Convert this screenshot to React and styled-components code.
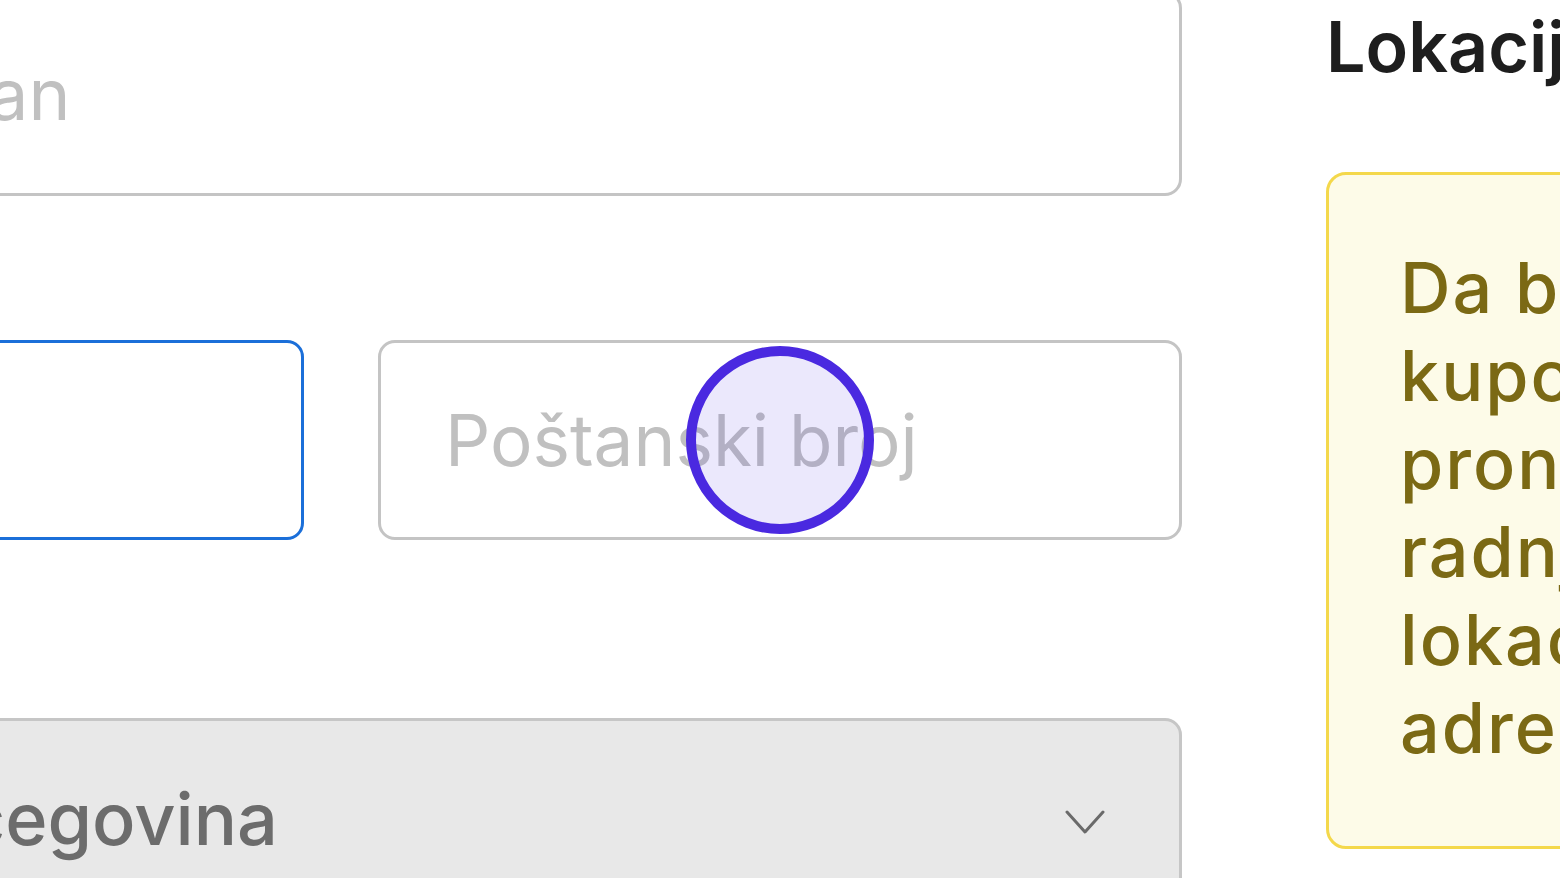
import styled, { createGlobalStyle } from "styled-components";

const Global = createGlobalStyle`
  html, body { margin: 0; padding: 0; background: #ffffff; overflow: hidden; }
  body { font-family: Inter, "Noto Sans", sans-serif; }
`;

const Page = styled.div`
  display: flex;
  align-items: flex-start;
  gap: 144px;
  width: 1560px;
  height: 878px;
  overflow: hidden;
`;

const Form = styled.div`
  flex: 0 0 1682px;
  margin-left: -500px;
  margin-top: -9px;
  display: flex;
  flex-direction: column;
`;

const Row = styled.div`
  display: grid;
  grid-template-columns: 1fr 1fr;
  gap: 74px;
  margin-top: ${(p) => p.$top || 0}px;
`;

const Field = styled.div`
  position: relative;
  margin-top: ${(p) => p.$top || 0}px;
`;

const Input = styled.input`
  box-sizing: border-box;
  width: 100%;
  height: ${(p) => p.$h || 200}px;
  padding: 0 64px 0 ${(p) => p.$pad || 64}px;
  border: 3px solid ${(p) => (p.$focused ? "#1b6fd9" : "#c4c4c4")};
  border-radius: 17px;
  background: #fff;
  font-family: Inter, sans-serif;
  font-size: 71px;
  color: #222;
  outline: none;
  &::placeholder { color: #c0c0c0; }
`;

const Select = styled.div`
  box-sizing: border-box;
  display: flex;
  align-items: center;
  justify-content: space-between;
  height: 200px;
  padding: 0 74px 0 68px;
  border: 3px solid #c6c6c6;
  border-radius: 17px;
  background: #e8e8e8;
  font-family: Inter, sans-serif;
  font-weight: 500;
  font-size: 72px;
  color: #6c6c6c;
  white-space: nowrap;

  svg { margin-top: 7px; }
`;

const Aside = styled.div`
  flex: 0 0 auto;
  padding-top: 5px;
  width: 900px;
`;

const Heading = styled.h2`
  margin: 0;
  font-family: Inter, sans-serif;
  font-weight: 600;
  font-size: 70px;
  line-height: 84px;
  color: #1e1e1e;
  white-space: nowrap;
`;

const Notice = styled.div`
  margin-top: 83px;
  padding: 69px 70px 74px 71px;
  border: 3px solid #f4d84b;
  border-radius: 20px;
  background: #fdfbe8;
  font-family: Inter, sans-serif;
  font-size: 70px;
  line-height: 88px;
  font-weight: 500;
  letter-spacing: 2px;
  color: #7b6914;
  white-space: nowrap;
`;

const Tap = styled.span`
  position: absolute;
  left: ${(p) => p.$x}px;
  top: 50%;
  width: 188px;
  height: 188px;
  margin: -94px 0 0 -94px;
  box-sizing: border-box;
  border: 10px solid #4a29e0;
  border-radius: 50%;
  background: rgba(75, 45, 225, 0.11);
  pointer-events: none;
`;

const Chevron = () => (
  <svg width="40" height="26" viewBox="0 0 40 26" fill="none">
    <path d="M2 3 L20 23 L38 3" stroke="#6a6a6a" strokeWidth="3" strokeLinecap="round" strokeLinejoin="round" />
  </svg>
);

export default function App() {
  const notice = ["Da biste", "kupcima", "pronalazak", "radnje olakšali,", "lokaciju unesite", "adresom."];
  return (
    <>
      <Global />
      <Page>
        <Form>
          <Field>
            <Input $h={205} $pad={57} placeholder="Stan, apartman" readOnly />
          </Field>
          <Row $top={144}>
            <Field>
              <Input $focused placeholder="" readOnly />
            </Field>
            <Field>
              <Input placeholder="Poštanski broj" readOnly />
              <Tap $x={402} />
            </Field>
          </Row>
          <Field $top={178}>
            <Select>
              <span>Bosna i Hercegovina</span>
              <Chevron />
            </Select>
          </Field>
        </Form>
        <Aside>
          <Heading>Lokacija</Heading>
          <Notice>
            {notice.map((line, i) => (
              <div key={i}>{line}</div>
            ))}
          </Notice>
        </Aside>
      </Page>
    </>
  );
}
